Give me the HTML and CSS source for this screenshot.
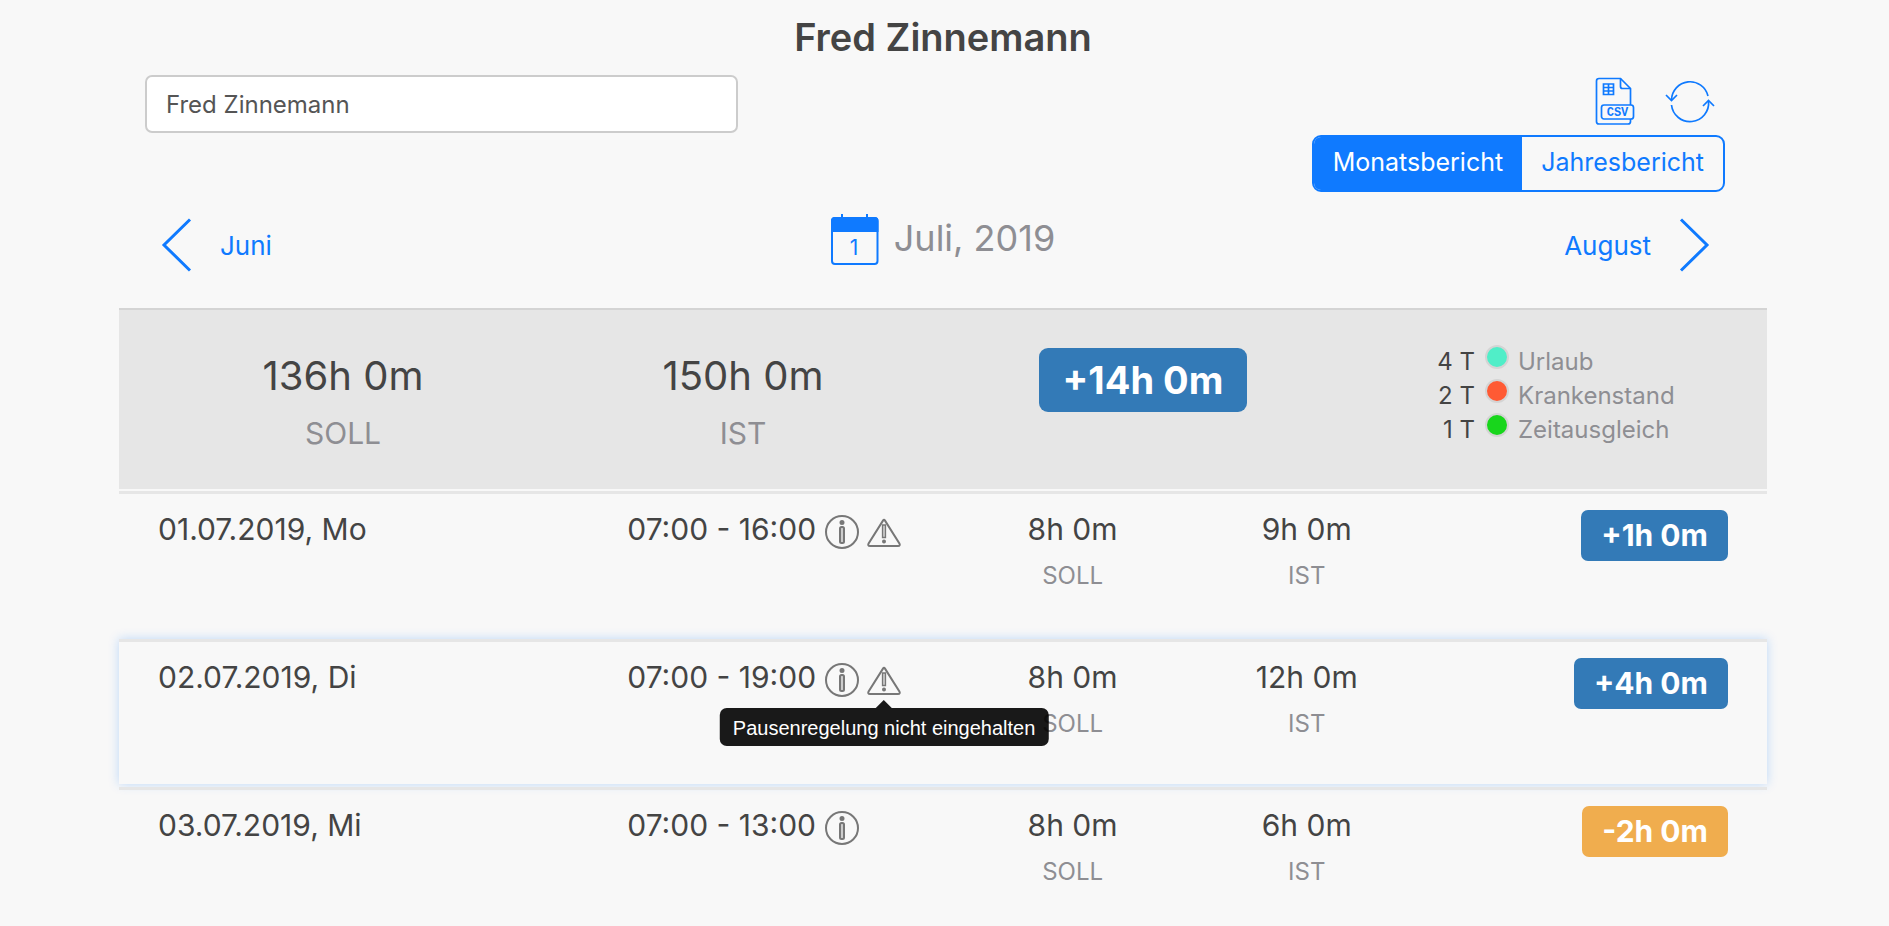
FILE: index.html
```html
<!DOCTYPE html>
<html lang="de">
<head>
    <meta charset="utf-8">
    <title>Monatsbericht - Fred Zinnemann</title>
    <link rel="stylesheet" href="styles.css">
</head>
<body>
    <!-- Icons used more than once -->
    <svg class="sprite" aria-hidden="true">
        <symbol id="icon-info" viewBox="0 0 36 36">
            <circle cx="18" cy="18" r="16"/>
            <circle cx="18" cy="8.500" r="1.500" fill="currentColor"/>
            <rect x="16" y="13" width="4" height="16" rx="1.500" fill="#ccc"/>
        </symbol>
        <symbol id="icon-warning" viewBox="0 0 36 36">
            <path d="M17 6.600 L2.600 29.400 Q1.400 32 4 32 H32 Q34.600 32 33.400 29.400 L19 6.600 Q18 5 17 6.600 Z"/>
            <path d="M16.500 11 H19.500 V23.500 H16.500 Z" stroke-width="1.300" fill="#ccc"/>
            <circle cx="18" cy="27.500" r="1" fill="currentColor"/>
        </symbol>
    </svg>

    <main class="report">
        <h1>Fred Zinnemann</h1>

        <!-- Toolbar -->
        <div class="toolbar">
            <input type="text" class="employee-input" value="Fred Zinnemann" aria-label="Mitarbeiter">
            <div class="actions">
                <div class="action-icons">
                    <button class="icon-btn" aria-label="CSV exportieren">
                        <svg width="40" height="50" viewBox="0 0 40 50">
                            <path d="M35.500 28 V11.500 L25.500 1.500 H4 Q1.500 1.500 1.500 4 V44.500 Q1.500 47 4 47 H33 Q35.500 47 35.500 44.500 V42"/>
                            <path d="M25.500 1.500 V9.500 Q25.500 11.500 27.500 11.500 H35.500"/>
                            <path d="M8.500 7 H18.500 V17.500 H8.500 Z M8.500 10.500 H18.500 M8.500 14 H18.500 M13.500 7 V17.500"/>
                            <rect x="6.500" y="28" width="32" height="14" rx="2.500"/>
                            <text x="22.500" y="39" text-anchor="middle">CSV</text>
                        </svg>
                    </button>
                    <button class="icon-btn" aria-label="Aktualisieren">
                        <svg width="50" height="50" viewBox="0 0 50 50">
                            <path d="M6.500 23 A18.500 18.500 0 0 1 43 19"/>
                            <path d="M6.500 28 A18.500 18.500 0 0 0 43.500 24"/>
                            <path d="M1 18 L6.500 23.500 L12 18"/>
                            <path d="M38 29 L43.500 23.500 L49 29"/>
                        </svg>
                    </button>
                </div>
                <div class="segmented">
                    <button class="segment active">Monatsbericht</button>
                    <button class="segment">Jahresbericht</button>
                </div>
            </div>
        </div>

        <!-- Month navigation -->
        <nav class="month-nav">
            <a href="#" class="month-link prev">
                <svg width="31" height="54" viewBox="0 0 31 54"><path d="M29 1.500 L3 27 L29 52.500"/></svg>
                Juni
            </a>
            <div class="month-current">
                <svg width="48" height="52" viewBox="0 0 48 52">
                    <rect x="1" y="5" width="45.500" height="46" rx="3"/>
                    <path d="M1 18 V8 Q1 5 4 5 H43.500 Q46.500 5 46.500 8 V18 Z" fill="currentColor"/>
                    <path d="M11 1 V6 M36 1 V6"/>
                    <text x="23" y="42" text-anchor="middle">1</text>
                </svg>
                <h2>Juli, 2019</h2>
            </div>
            <a href="#" class="month-link next">
                August
                <svg width="31" height="54" viewBox="0 0 31 54"><path d="M2 1.500 L28 27 L2 52.500"/></svg>
            </a>
        </nav>

        <!-- Summary -->
        <section class="summary">
            <div class="total">
                <div class="total-value">136h 0m</div>
                <div class="total-label">SOLL</div>
            </div>
            <div class="total">
                <div class="total-value">150h 0m</div>
                <div class="total-label">IST</div>
            </div>
            <div class="total">
                <span class="badge badge-lg">+14h 0m</span>
            </div>
            <ul class="absences">
                <li><span class="days">4 T</span><span class="dot vacation"></span>Urlaub</li>
                <li><span class="days">2 T</span><span class="dot sick"></span>Krankenstand</li>
                <li><span class="days">1 T</span><span class="dot comp"></span>Zeitausgleich</li>
            </ul>
        </section>

        <!-- Days -->
        <ul class="days-list">
            <li class="day">
                <div>01.07.2019, Mo</div>
                <div class="time">
                    07:00 - 16:00
                    <div class="day-icons">
                        <svg class="day-icon"><use href="#icon-info"/></svg>
                        <svg class="day-icon"><use href="#icon-warning"/></svg>
                    </div>
                </div>
                <div class="hours">8h 0m<small>SOLL</small></div>
                <div class="hours">9h 0m<small>IST</small></div>
                <div class="diff"><span class="badge">+1h 0m</span></div>
            </li>
            <li class="day selected">
                <div>02.07.2019, Di</div>
                <div class="time">
                    07:00 - 19:00
                    <div class="day-icons">
                        <svg class="day-icon"><use href="#icon-info"/></svg>
                        <span class="hint">
                            <svg class="day-icon"><use href="#icon-warning"/></svg>
                            <span class="tooltip" role="tooltip">Pausenregelung nicht eingehalten</span>
                        </span>
                    </div>
                </div>
                <div class="hours">8h 0m<small>SOLL</small></div>
                <div class="hours">12h 0m<small>IST</small></div>
                <div class="diff"><span class="badge">+4h 0m</span></div>
            </li>
            <li class="day">
                <div>03.07.2019, Mi</div>
                <div class="time">
                    07:00 - 13:00
                    <div class="day-icons">
                        <svg class="day-icon"><use href="#icon-info"/></svg>
                    </div>
                </div>
                <div class="hours">8h 0m<small>SOLL</small></div>
                <div class="hours">6h 0m<small>IST</small></div>
                <div class="diff"><span class="badge badge-warning">-2h 0m</span></div>
            </li>
        </ul>
    </main>
</body>
</html>
```

FILE: styles.css
```css
* {
    box-sizing: border-box;
}

body {
    margin: 0;
    font-family: Inter, "Liberation Sans", sans-serif;
    background-color: #f8f8f8;
    color: #444;
}

h1, h2, ul {
    margin: 0;
    padding: 0;
    list-style: none;
}

svg {
    display: block;
    flex: none;
    fill: none;
    stroke: currentColor;
    stroke-width: 2px;
}

svg text {
    fill: currentColor;
    stroke: none;
}

.sprite {
    position: absolute;
    width: 0;
    height: 0;
}

.report {
    margin: 0 122px 0 119px;
    padding-top: 13px;
}

h1 {
    font-size: 38px;
    line-height: 48px;
    font-weight: 600;
    text-align: center;
}

/* Toolbar */
.toolbar {
    display: grid;
    grid-template-columns: 3fr 5fr;
    align-items: start;
    padding: 14px 42px 0 26px;
}

.employee-input {
    width: 100%;
    height: 58px;
    padding: 0 19px;
    font: 24px Inter, sans-serif;
    color: #555;
    background: #fff;
    border: 2px solid #ccc;
    border-radius: 7px;
}

.actions {
    display: flex;
    flex-direction: column;
    align-items: flex-end;
    gap: 8px;
}

.action-icons {
    display: flex;
    gap: 30px;
    padding: 2px 10px 0 0;
}

.icon-btn {
    padding: 0;
    border: none;
    background: none;
    color: #0f7aff;
    cursor: pointer;
}

.icon-btn svg {
    stroke-width: 1.7px;
}

.icon-btn text {
    font: bold 12px "Liberation Mono", monospace;
}

.segmented {
    display: flex;
    height: 57px;
    border: 2px solid #0f7aff;
    border-radius: 9px;
    overflow: hidden;
}

.segment {
    padding: 0 19px 4px;
    border: none;
    background: none;
    font: 25px Inter, sans-serif;
    color: #0f7aff;
    cursor: pointer;
}

.segment.active {
    background: #0f7aff;
    color: #fff;
}

/* Month navigation */
.month-nav {
    display: grid;
    grid-template-columns: 1fr auto 1fr;
    padding: 21px 0 36px;
}

.month-link {
    display: flex;
    align-items: center;
    gap: 28px;
    padding-top: 5px;
    font-size: 26px;
    color: #0f7aff;
    text-decoration: none;
}

.month-link svg {
    stroke-width: 3px;
}

.prev {
    padding-left: 42px;
}

.next {
    justify-content: flex-end;
    padding-right: 57px;
}

.month-current {
    display: flex;
    gap: 15px;
    color: #0f7aff;
}

.month-current text {
    font-size: 21px;
}

.month-current h2 {
    font-size: 36px;
    line-height: 50px;
    font-weight: 400;
    color: #8e8e93;
}

/* Summary */
.summary {
    display: grid;
    grid-template-columns: repeat(4, 1fr);
    height: 181px;
    padding: 38px 24px 0;
    background: #e6e6e6;
    border-top: 2px solid #d4d4d4;
}

.total {
    text-align: center;
}

.total-value {
    font-size: 40px;
    line-height: 56px;
}

.total-label {
    font-size: 30px;
    line-height: 58px;
    color: #8e8e93;
}

.badge {
    display: inline-block;
    padding: 0 20px;
    font-size: 30px;
    line-height: 51px;
    font-weight: 700;
    color: #fff;
    background: #337ab7;
    border-radius: 7px;
}

.badge-lg {
    padding: 0 24px;
    font-size: 38px;
    line-height: 64px;
    border-radius: 9px;
}

.badge-warning {
    background: #f0ad4e;
}

.absences {
    margin-top: -3px;
    padding-left: 80px;
    font-size: 24px;
    line-height: 34px;
    color: #8e8e93;
}

.absences li {
    display: flex;
}

.days {
    width: 52px;
    text-align: right;
    color: #444;
}

.dot {
    width: 24px;
    height: 24px;
    margin: 0 9px 0 10px;
    border: 2px solid #d4d4d4;
    border-radius: 50%;
}

.vacation {
    background: #50eec8;
}

.sick {
    background: #ff5a34;
}

.comp {
    background: #18d61c;
}

/* Days */
.day {
    display: grid;
    grid-template-columns: 469fr 328fr 234fr 234fr 304fr;
    height: 145px;
    margin: 2px 0 3px;
    padding: 16px 39px 0;
    border-top: 3px solid #e6e6e6;
    font-size: 30px;
    line-height: 38px;
}

.day + .day {
    margin-top: 3px;
}

.selected {
    box-shadow: 0 0 10px rgba(15, 122, 255, 0.25);
}

.time {
    display: flex;
    gap: 8px;
}

.day-icons {
    display: flex;
    gap: 6px;
}

.day-icon {
    width: 36px;
    height: 36px;
    margin-top: 4px;
    stroke-width: 2px;
    color: #777;
}

.hours {
    text-align: center;
}

.hours small {
    display: block;
    margin-top: 9px;
    font-size: 24px;
    color: #8e8e93;
}

.diff {
    text-align: right;
}

.hint {
    position: relative;
}

/* Tooltip below the warning icon */
.tooltip {
    position: absolute;
    top: 50px;
    left: 50%;
    z-index: 1;
    transform: translateX(-50%);
    padding: 2px 13px 0;
    font: 20px/36px "Liberation Sans", sans-serif;
    white-space: nowrap;
    color: #fff;
    background: rgba(0, 0, 0, 0.9);
    border-radius: 7px;
}

.tooltip::before {
    content: "";
    position: absolute;
    bottom: 100%;
    left: 50%;
    margin-left: -8px;
    border: 8px solid transparent;
    border-top: none;
    border-bottom-color: #181818;
}
```
